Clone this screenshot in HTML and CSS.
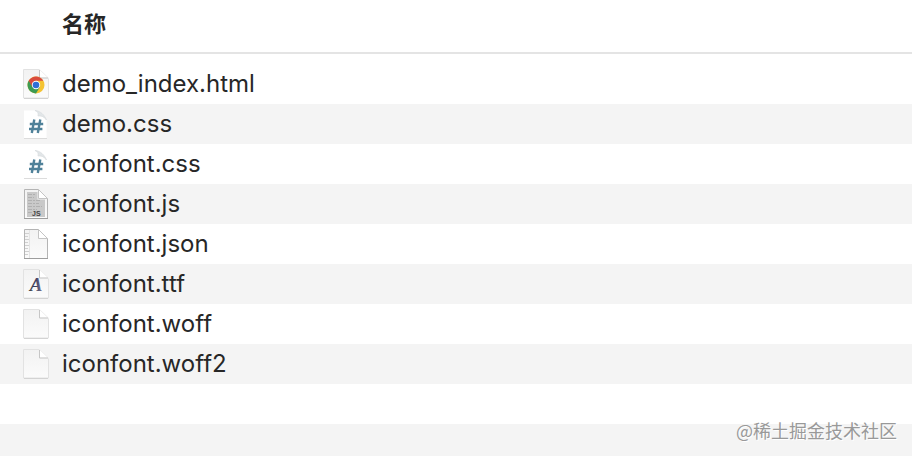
FILE: index.html
```html
<!DOCTYPE html>
<html lang="zh-CN">
<head>
<meta charset="utf-8">
<title>iconfont</title>
<link rel="stylesheet" href="styles.css">
</head>
<body>
<svg class="defs" aria-hidden="true">
  <defs>
    <linearGradient id="paper" x1="0" y1="0" x2="0" y2="1">
      <stop offset="0" stop-color="#f2f2f2"/><stop offset="1" stop-color="#fbfbfb"/>
    </linearGradient>
    <linearGradient id="ink" x1="0" y1="0" x2="1" y2="0">
      <stop offset="0" stop-color="#444"/><stop offset=".5" stop-color="#3c3c60"/><stop offset="1" stop-color="#777b9a"/>
    </linearGradient>
    <symbol id="page" viewBox="0 0 28 32">
      <path d="M2 30.500h24" stroke="#c4c4c4"/>
      <path d="M1.500 1.500h16l9 9v19.500h-25z" fill="url(#paper)" stroke="#e2e2e2"/>
      <path d="M17.500 1.500v8.500h9z" fill="#fff" stroke="#f0f0f0"/>
      <path d="M17.500 2v8h8.500" fill="none" stroke="#c6c6c6"/>
    </symbol>
    <symbol id="page-dark" viewBox="0 0 28 32">
      <path d="M2.500 1.500h14l9 9v20h-23z" fill="url(#paper)" stroke="#b4b4b4"/>
      <path d="M2 30.500h24" stroke="#9d9d9d"/>
      <path d="M16.500 1.500v9h9z" fill="#fff" stroke="#c4c4c4"/>
    </symbol>
    <symbol id="css" viewBox="0 0 28 32">
      <path d="M2 2.500h13l9.500 9v19h-22.500z" fill="#fff"/>
      <path d="M2 30.500h23" stroke="#dcdcdc"/>
      <path d="M13 2.500c3 1 3.500 3 3 5.500 3-.5 6 .5 8.500 4-2-5-6-9-11.500-9.500z" fill="#e2e6e8" stroke="#d9dde0" stroke-width=".8"/>
      <path d="M12.300 11.500l-2.500 13.500M18.300 11.500l-2.500 13.500M7.800 16h13.400M7 21h13.400" fill="none" stroke="#4f8199" stroke-width="2.400"/>
    </symbol>
  </defs>
</svg>
<main class="files">
  <table class="list">
    <thead>
      <tr><th scope="col">名称</th></tr>
    </thead>
    <tbody>
      <tr><td><div class="file">
        <svg class="icon" viewBox="0 0 28 32" aria-hidden="true">
          <use href="#page"/>
          <g transform="translate(14 17)">
            <circle r="8.500" fill="#f4c332"/>
            <path d="M-7.360-4.250A8.500 8.500 0 0 0 0 8.500L3.900 2 0 0z" fill="#3d9b52"/>
            <path d="M-7.360-4.250A8.500 8.500 0 0 1 7.360-4.250H0L-3.600 2z" fill="#d94b3d"/>
            <circle r="4.200" fill="#fff"/>
            <circle r="3.300" fill="#2f6fd6"/>
          </g>
        </svg><span>demo_index.html</span></div></td></tr>
      <tr><td><div class="file"><svg class="icon" viewBox="0 0 28 32" aria-hidden="true"><use href="#css"/></svg><span>demo.css</span></div></td></tr>
      <tr><td><div class="file"><svg class="icon" viewBox="0 0 28 32" aria-hidden="true"><use href="#css"/></svg><span>iconfont.css</span></div></td></tr>
      <tr><td><div class="file">
        <svg class="icon" viewBox="0 0 28 32" aria-hidden="true">
          <use href="#page-dark"/>
          <path d="M5 4h10.500v7.500h7.500v17.500h-18z" fill="#c9c9c9"/>
          <path d="M6 6.500h8M6 9.500h6M6 12.500h13M6 15.500h11M6 18.500h14M6 21.500h9M6 24.500h4" stroke="#b0b0b0" stroke-dasharray="4 1 2 1"/>
          <text class="js" x="10" y="28">JS</text>
        </svg><span>iconfont.js</span></div></td></tr>
      <tr><td><div class="file">
        <svg class="icon" viewBox="0 0 28 32" aria-hidden="true">
          <use href="#page-dark"/>
          <path d="M7.500 2v28" stroke="#e4e4e4"/>
          <path d="M3 5.500h4M3 8.500h3M3 11.500h4M3 14.500h3M3 17.500h4M3 20.500h3M3 23.500h4M3 26.500h3" stroke="#d0d0d0"/>
        </svg><span>iconfont.json</span></div></td></tr>
      <tr><td><div class="file">
        <svg class="icon" viewBox="0 0 28 32" aria-hidden="true">
          <use href="#page"/>
          <text class="glyph" x="14" y="23">A</text>
        </svg><span>iconfont.ttf</span></div></td></tr>
      <tr><td><div class="file"><svg class="icon" viewBox="0 0 28 32" aria-hidden="true"><use href="#page"/></svg><span>iconfont.woff</span></div></td></tr>
      <tr><td><div class="file"><svg class="icon" viewBox="0 0 28 32" aria-hidden="true"><use href="#page"/></svg><span>iconfont.woff2</span></div></td></tr>
    </tbody>
  </table>
  <div class="watermark">@稀土掘金技术社区</div>
</main>
</body>
</html>
```
FILE: styles.css
```css
* {
  box-sizing: border-box;
}

body {
  margin: 0;
  background: #fff;
  color: #272727;
  font-family: Inter, "Noto Sans CJK SC", sans-serif;
}

.defs {
  position: absolute;
  width: 0;
  height: 0;
}

.files {
  position: relative;
  min-height: 100vh;
  /* Stripes continue below the last file. */
  background: repeating-linear-gradient(#fff 0 40px, #f4f4f4 40px 80px) 0 64px no-repeat;
}

.list {
  width: 100%;
  border-collapse: separate;
  border-spacing: 0;
}

.list th {
  height: 54px;
  padding: 0 62px 4px;
  border-bottom: 2px solid #e4e4e4;
  background: #fff;
  font-size: 22px;
  line-height: 32px;
  font-weight: 700;
  text-align: left;
}

.list tbody::before {
  content: "";
  display: block;
  height: 10px;
}

.list td {
  padding: 0 22px;
}

.file {
  display: flex;
  align-items: center;
  gap: 12px;
  height: 40px;
  font-size: 24px;
  line-height: 40px;
}

.icon {
  flex: none;
  width: 28px;
  height: 32px;
}

.js {
  font: 700 7px "Liberation Sans", sans-serif;
  fill: #444;
}

.glyph {
  font: italic 700 19px "Liberation Serif", serif;
  text-anchor: middle;
  fill: url(#ink);
}

.watermark {
  position: absolute;
  right: 15px;
  bottom: 12px;
  color: #999;
  font-family: "Noto Sans CJK SC", sans-serif;
  font-size: 18px;
  font-weight: 400;
  line-height: 28px;
  text-shadow: 1px 1px 0 #fff;
}
```
